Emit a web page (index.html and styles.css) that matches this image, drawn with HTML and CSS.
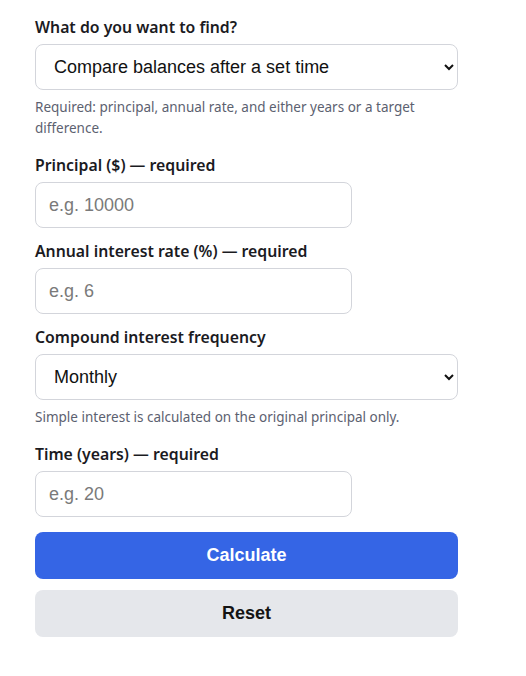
FILE: index.html
```html
<!DOCTYPE html>
<html lang="en">
<head>
  <meta charset="UTF-8" />
  <meta name="viewport" content="width=device-width, initial-scale=1" />
  <title>Compound Interest Calculator</title>
  <link rel="stylesheet" href="styles.css">
</head>
<body>

<form class="calc-form" id="calcForm">
  <div class="field">
    <label for="mode">What do you want to find?</label>
    <select id="mode" class="wide">
      <option>Compare balances after a set time</option>
      <option>Time to reach a target difference</option>
    </select>
    <p class="hint">Required: principal, annual rate, and either years or a target difference.</p>
  </div>

  <div class="field">
    <label for="principal">Principal ($) — required</label>
    <input id="principal" type="text" placeholder="e.g. 10000">
  </div>

  <div class="field">
    <label for="rate">Annual interest rate (%) — required</label>
    <input id="rate" type="text" placeholder="e.g. 6">
  </div>

  <div class="field">
    <label for="freq">Compound interest frequency</label>
    <select id="freq" class="wide">
      <option>Annually</option>
      <option>Quarterly</option>
      <option selected>Monthly</option>
      <option>Daily</option>
    </select>
    <p class="hint">Simple interest is calculated on the original principal only.</p>
  </div>

  <div class="field">
    <label for="years">Time (years) — required</label>
    <input id="years" type="text" placeholder="e.g. 20">
  </div>

  <button type="button" class="btn btn-primary">Calculate</button>
  <button type="reset" class="btn btn-secondary">Reset</button>
</form>

</body>
</html>
```

FILE: styles.css
```css
body {
  margin: 0;
  background: #fff;
  font-family: 'Noto Sans', 'Open Sans', sans-serif;
  color: #1b1b1f;
}
.calc-form {
  width: 423px;
  padding: 15px 0 30px 35px;
}
.field {
  margin-bottom: 11px;
}
label {
  display: block;
  font-size: 15.8px;
  font-weight: 600;
  line-height: 24px;
  margin-bottom: 5px;
}
input, select {
  display: block;
  box-sizing: border-box;
  height: 46px;
  border: 1px solid #d3d5db;
  border-radius: 8px;
  background: #fff;
  font-family: 'Liberation Sans', Arial, sans-serif;
  font-size: 18px;
  color: #111;
  padding: 0 13px;
}
input {
  width: 317px;
}
input::placeholder {
  color: #7a7a7a;
}
select.wide {
  width: 100%;
  padding-left: 14px;
}
.hint {
  margin: 6.5px 0 0;
  padding-bottom: 3.5px;
  font-size: 13.5px;
  line-height: 21px;
  color: #5c6170;
}
.btn {
  display: block;
  width: 100%;
  height: 47px;
  border: none;
  border-radius: 8px;
  font-family: 'Liberation Sans', Arial, sans-serif;
  font-size: 18px;
  font-weight: 700;
  cursor: pointer;
}
.btn-primary {
  margin-top: 15px;
  background: #3565e5;
  color: #fff;
}
.btn-secondary {
  margin-top: 11px;
  background: #e5e7eb;
  color: #141414;
}
```
